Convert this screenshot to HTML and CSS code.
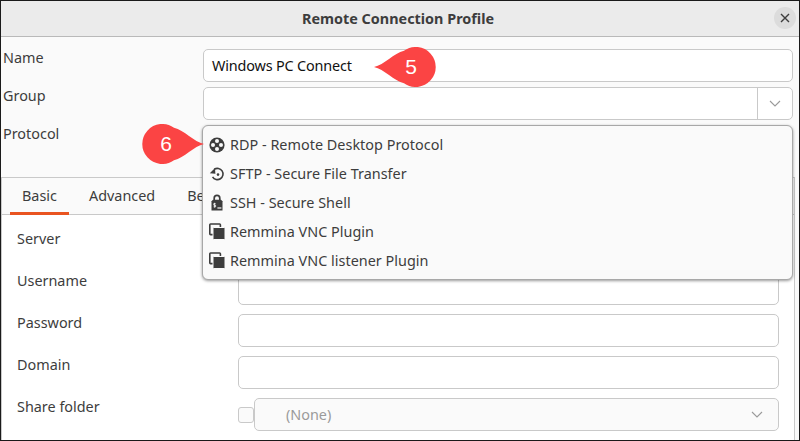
FILE: index.html
```html
<!DOCTYPE html>
<html lang="en">
<head>
<meta charset="utf-8">
<title>Remote Connection Profile</title>
<link rel="stylesheet" href="styles.css">
</head>
<body>
<div class="window">
  <header class="titlebar">
    <h1 class="title">Remote Connection Profile</h1>
    <button class="close" aria-label="Close">
      <svg width="10" height="10" viewBox="0 0 10 10"><path d="M1 1l8 8M9 1l-8 8" class="close-x"/></svg>
    </button>
  </header>
  <section class="top-form">
    <div class="top-row">
      <span class="top-label">Name</span>
      <div class="field"><span class="field-text">Windows PC Connect</span></div>
    </div>
    <div class="top-row">
      <span class="top-label">Group</span>
      <div class="field combo">
        <span class="combo-entry"></span>
        <span class="combo-btn"><svg width="12" height="7" viewBox="0 0 12 7"><path d="M1 1l5 5 5-5" class="chev"/></svg></span>
      </div>
    </div>
    <div class="top-row">
      <span class="top-label">Protocol</span>
    </div>
  </section>
  <section class="notebook">
    <nav class="tabs">
      <span class="tab active">Basic</span>
      <span class="tab">Advanced</span>
      <span class="tab tab-cut">Be</span>
    </nav>
    <div class="panel">
      <div class="row"><span class="label">Server</span><div class="field"></div></div>
      <div class="row"><span class="label">Username</span><div class="field"></div></div>
      <div class="row"><span class="label">Password</span><div class="field"></div></div>
      <div class="row"><span class="label">Domain</span><div class="field"></div></div>
      <div class="row">
        <span class="label">Share folder</span>
        <div class="share">
          <span class="check"></span>
          <div class="field select">
            <span class="none">(None)</span>
            <svg width="12" height="7" viewBox="0 0 12 7"><path d="M1 1l5 5 5-5" class="chev"/></svg>
          </div>
        </div>
      </div>
    </div>
  </section>

  <ul class="popup">
    <li class="item">
      <svg class="ico" width="16" height="16" viewBox="0 0 16 16"><circle cx="8" cy="8" r="7.6" class="solid"/><circle cx="8" cy="4" r="2" class="cut"/><circle cx="8" cy="12" r="2" class="cut"/><circle cx="4" cy="8" r="2" class="cut"/><circle cx="12" cy="8" r="2" class="cut"/></svg>
      RDP - Remote Desktop Protocol
    </li>
    <li class="item">
      <svg class="ico" width="16" height="16" viewBox="0 0 16 16"><path d="M5.2 3.4A5.6 5.6 0 1 1 3.6 10.8" class="ring"/><path d="M0.8 7.2L6 2 6.4 7.8z" class="solid"/><circle cx="9" cy="8.6" r="1.3" class="solid"/></svg>
      SFTP - Secure File Transfer
    </li>
    <li class="item">
      <svg class="ico" width="16" height="16" viewBox="0 0 16 16"><path d="M5.2 5.5V3.2a2.8 2.8 0 0 1 5.6 0v2.3" class="shackle"/><path d="M2.5 15.5V6.2L4 4.8h8l1.5 1.4v9.3z" class="solid"/><path d="M8.4 13h4" class="prompt"/><path d="M6.6 8.6H4.8v1.6h1.8v1.6H4.6M5.6 7.8v4.8" class="prompt-thin"/></svg>
      SSH - Secure Shell
    </li>
    <li class="item">
      <svg class="ico" width="16" height="16" viewBox="0 0 16 16"><rect x="0.8" y="0" width="10.6" height="10.6" rx="0.8" class="ring"/><rect x="4" y="3.5" width="12" height="12" rx="0.8" class="front"/></svg>
      Remmina VNC Plugin
    </li>
    <li class="item">
      <svg class="ico" width="16" height="16" viewBox="0 0 16 16"><rect x="0.8" y="0" width="10.6" height="10.6" rx="0.8" class="ring"/><rect x="4" y="3.5" width="12" height="12" rx="0.8" class="front"/></svg>
      Remmina VNC listener Plugin
    </li>
  </ul>

  <div class="callout callout-5">
    <svg width="62" height="40" viewBox="0 0 62 40"><path d="M0 20C10 18 20 6 30 3.8A20 20 0 1 1 30 36.2C20 34 10 22 0 20Z" class="callout-fill"/></svg>
    <span class="callout-num">5</span>
  </div>
  <div class="callout callout-6">
    <svg width="62" height="40" viewBox="0 0 62 40"><path d="M62 20C52 18 42 6 32 3.8A20 20 0 1 0 32 36.2C42 34 52 22 62 20Z" class="callout-fill"/></svg>
    <span class="callout-num">6</span>
  </div>
</div>
</body>
</html>
```
FILE: styles.css
```css
* { box-sizing: border-box; }
html, body { margin: 0; padding: 0; }
body {
  width: 800px;
  height: 441px;
  overflow: hidden;
  font-family: "Noto Sans", "Open Sans", sans-serif;
  font-size: 14.4px;
  color: #3d3d3d;
}
.window {
  position: relative;
  width: 800px;
  height: 441px;
  background: #fafafa;
  border: 1px solid #1a1a1a;
  overflow: hidden;
  display: flex;
  flex-direction: column;
}
.titlebar {
  height: 36px;
  flex: none;
  background: #ebebeb;
  border-bottom: 1px solid #b9b9b9;
  display: flex;
  align-items: center;
  justify-content: center;
  position: relative;
}
.title {
  margin: 0;
  padding-right: 4px;
  font-size: 14.4px;
  font-weight: 700;
  color: #3d3d3d;
}
.close {
  position: absolute;
  right: 3px;
  top: 6px;
  width: 22px;
  height: 22px;
  padding: 0;
  border: 0;
  border-radius: 50%;
  background: #dcdcdc;
  display: flex;
  align-items: center;
  justify-content: center;
}
.close-x { stroke: #3d3d3d; stroke-width: 1.4; fill: none; }
.top-form {
  flex: none;
  height: 140px;
  padding: 12px 6px 0 2px;
  display: flex;
  flex-direction: column;
  gap: 5px;
}
.top-row {
  display: flex;
  height: 33px;
}
.top-label {
  width: 200px;
  flex: none;
  line-height: 17px;
}
.field {
  flex: 1;
  height: 33px;
  background: #fff;
  border: 1px solid #c9c9c9;
  border-radius: 5px;
  display: flex;
  align-items: center;
}
.field-text {
  padding-left: 8px;
  color: #111;
  letter-spacing: -0.15px;
}
.combo-entry { flex: 1; height: 100%; }
.combo-btn {
  width: 35px;
  height: 100%;
  border-left: 1px solid #c9c9c9;
  display: flex;
  align-items: center;
  justify-content: center;
}
.chev { stroke: #9a9a9a; stroke-width: 1.1; fill: none; }
.notebook {
  flex: 1;
  margin-right: 4px;
  border: 1px solid #c9c9c9;
  border-width: 1px 1px 0 1px;
  background: #fff;
  display: flex;
  flex-direction: column;
}
.tabs {
  height: 37px;
  flex: none;
  background: #fafafa;
  border-bottom: 1px solid #c9c9c9;
  display: flex;
  padding-left: 8px;
}
.tab {
  padding: 8px 12px 0;
  line-height: 19px;
  margin-right: 8px;
  position: relative;
}
.tab-cut { padding-right: 0; }
.tab.active::after {
  content: "";
  position: absolute;
  left: 0;
  right: 0;
  bottom: -1px;
  height: 3px;
  background: #e95420;
}
.panel {
  flex: 1;
  padding: 15px 15px 0 15px;
  display: flex;
  flex-direction: column;
  gap: 9px;
}
.row {
  display: flex;
  height: 33px;
}
.label {
  width: 221px;
  flex: none;
  line-height: 17px;
  color: #3d3d3d;
}
.share {
  flex: 1;
  display: flex;
  align-items: center;
}
.check {
  width: 16px;
  height: 16px;
  flex: none;
  background: #fafafa;
  border: 1px solid #c9c9c9;
  border-radius: 3px;
}
.select {
  background: #fafafa;
  justify-content: space-between;
  padding-right: 15px;
}
.none {
  padding-left: 31px;
  color: #9a9a9a;
}
.popup {
  position: absolute;
  left: 201px;
  top: 124px;
  width: 591px;
  height: 155px;
  margin: 0;
  padding: 4px 0 0 6px;
  list-style: none;
  background: #fafafa;
  border: 1px solid #a8a8a8;
  border-radius: 6px;
  box-shadow: 0 1px 3px rgba(0, 0, 0, 0.4);
}
.item {
  height: 29px;
  display: flex;
  align-items: center;
  gap: 5px;
  color: #3d3d3d;
  letter-spacing: 0.02px;
}
.ico { flex: none; overflow: visible; }
.solid { fill: #3d3d3d; }
.cut { fill: #fafafa; }
.ring { stroke: #3d3d3d; stroke-width: 1.6; fill: none; }
.front { fill: #3d3d3d; stroke: #fafafa; stroke-width: 1; }
.shackle { stroke: #3d3d3d; stroke-width: 1.7; fill: none; }
.prompt { stroke: #fafafa; stroke-width: 1.2; fill: none; }
.prompt-thin { stroke: #fafafa; stroke-width: 0.8; fill: none; }
.callout {
  position: absolute;
  width: 62px;
  height: 40px;
}
.callout svg { display: block; }
.callout-fill { fill: #fb4444; }
.callout-5 { left: 373px; top: 46px; }
.callout-6 { left: 141px; top: 123px; }
.callout-num {
  position: absolute;
  top: 0;
  line-height: 40px;
  width: 40px;
  text-align: center;
  color: #fff;
  font-family: "Liberation Sans", sans-serif;
  font-size: 21px;
}
.callout-5 .callout-num { left: 17px; }
.callout-6 .callout-num { left: 4px; }
```
